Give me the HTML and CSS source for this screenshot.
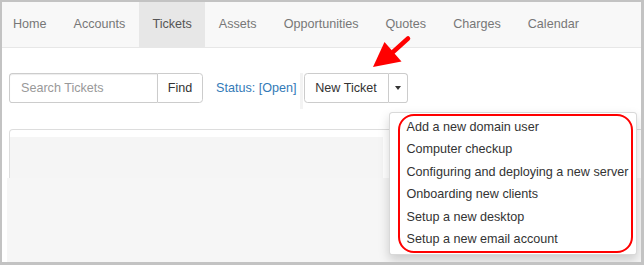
FILE: index.html
```html
<!DOCTYPE html>
<html>
<head>
	<title>Tickets</title>
	<link rel="stylesheet" href="styles.css">
</head>
<body>
	<div class="frame">
		<nav class="navbar">
			<ul class="nav">
				<li><a href="#">Home</a></li>
				<li><a href="#">Accounts</a></li>
				<li class="active"><a href="#">Tickets</a></li>
				<li><a href="#">Assets</a></li>
				<li><a href="#">Opportunities</a></li>
				<li><a href="#">Quotes</a></li>
				<li><a href="#">Charges</a></li>
				<li><a href="#">Calendar</a></li>
			</ul>
		</nav>

		<div class="content">
			<div class="toolbar">
				<div class="search-group">
					<input type="text" class="search-input" placeholder="Search Tickets">
					<button class="btn btn-find">Find</button>
				</div>
				<a href="#" class="status-link">Status: [Open]</a>
				<span class="divider"></span>
				<div class="btn-group">
					<button class="btn btn-new">New Ticket</button>
					<button class="btn btn-caret"><span class="caret"></span></button>
					<ul class="dropdown">
						<li><a href="#">Add a new domain user</a></li>
						<li><a href="#">Computer checkup</a></li>
						<li><a href="#">Configuring and deploying a new server</a></li>
						<li><a href="#">Onboarding new clients</a></li>
						<li><a href="#">Setup a new desktop</a></li>
						<li><a href="#">Setup a new email account</a></li>
					</ul>
				</div>
			</div>

			<div class="panel">
				<div class="panel-head"></div>
			</div>
			<div class="panel-rest"></div>
		</div>

		<!-- annotations drawn over the screenshot -->
		<div class="callout"></div>
		<svg class="arrow" width="644" height="265" viewBox="0 0 644 265">
			<line x1="393" y1="52" x2="408" y2="38.5" stroke="#ff0000" stroke-width="4.5" stroke-linecap="round"/>
			<polygon points="373,67 384.5,42 401.5,61.5" fill="#ff0000"/>
		</svg>
	</div>
</body>
</html>
```

FILE: styles.css
```css
* {
	box-sizing: border-box;
}
body {
	margin: 0;
	font-family: "Liberation Sans", Arial, sans-serif;
	font-size: 12.6px;
	color: #333;
	background-color: #fff;
}
.frame {
	position: relative;
	width: 644px;
	height: 265px;
	border-style: solid;
	border-color: #c3c3c3;
	border-width: 2px 3px 3px 2px;
	overflow: hidden;
	background-color: #fff;
}

/* top navigation */
.navbar {
	height: 46px;
	background-color: #f8f8f8;
	border-bottom: 1px solid #e7e7e7;
}
.nav {
	display: flex;
	margin: 0 0 0 -2.5px;
	padding: 0;
	list-style: none;
}
.nav a {
	display: block;
	padding: 0 13.5px;
	line-height: 45px;
	color: #777;
	text-decoration: none;
}
.nav .active a {
	background-color: #e7e7e7;
	color: #555;
}

/* toolbar */
.content {
	padding: 25px 0 0 7px;
}
.toolbar {
	display: flex;
	align-items: center;
	height: 30px;
}
.search-group {
	display: flex;
}
.search-input {
	width: 148px;
	height: 30px;
	padding: 0 11px;
	border: 1px solid #ccc;
	border-right: 0;
	border-radius: 3.6px 0 0 3.6px;
	font-family: inherit;
	font-size: 12.6px;
	color: #555;
	box-shadow: inset 0 1px 1px rgba(0,0,0,.075);
}
.search-input::placeholder {
	color: #999;
}
.btn {
	height: 30px;
	padding: 0;
	border: 1px solid #ccc;
	background-color: #fff;
	font-family: inherit;
	font-size: 12.6px;
	color: #333;
}
.btn-find {
	width: 46px;
	border-radius: 0 3.6px 3.6px 0;
}
.status-link {
	margin-left: 13px;
	color: #337ab7;
	text-decoration: none;
}
.divider {
	width: 3px;
	height: 36px;
	margin: 6px 1px 0 3px;
	background-color: #f3f3f3;
}
.btn-group {
	position: relative;
	display: flex;
}
.btn-new {
	width: 85px;
	border-radius: 3.6px 0 0 3.6px;
}
.btn-caret {
	width: 19px;
	border-left: 0;
	border-radius: 0 3.6px 3.6px 0;
	display: flex;
	align-items: center;
	justify-content: center;
}
.caret {
	width: 0;
	height: 0;
	border-top: 4px solid #333;
	border-left: 3.6px solid transparent;
	border-right: 3.6px solid transparent;
}

/* dropdown menu */
.dropdown {
	position: absolute;
	left: 85px;
	top: 39px;
	width: 248px;
	margin: 0;
	padding: 3px 0;
	list-style: none;
	background-color: #fff;
	border: 1px solid rgba(0,0,0,.15);
	border-radius: 3.6px;
	box-shadow: 0 5px 11px rgba(0,0,0,.175);
	z-index: 2;
}
.dropdown a {
	display: block;
	padding: 2.7px 0 2.7px 17px;
	line-height: 17.1px;
	color: #333;
	text-decoration: none;
	white-space: nowrap;
}

/* list panel underneath */
.panel {
	margin: 26px -10px 0 0;
	height: 49px;
	padding-top: 7px;
	border: 1px solid #ddd;
	border-bottom: 0;
	border-radius: 4px 0 0 0;
	background-color: #fff;
}
.panel-head {
	width: 373px;
	height: 42px;
	background-color: #f5f5f5;
}
.panel-rest {
	height: 90px;
	margin: 0 -10px 0 -2px;
	background-color: #f6f6f6;
	border-top: 1px solid #f6f6f6;
}

/* red markup */
.callout {
	position: absolute;
	left: 396px;
	top: 112px;
	width: 235px;
	height: 139px;
	border: 2px solid #ff0000;
	border-radius: 16px;
	z-index: 3;
}
.arrow {
	position: absolute;
	left: -2px;
	top: -2px;
	z-index: 4;
	pointer-events: none;
}
```
